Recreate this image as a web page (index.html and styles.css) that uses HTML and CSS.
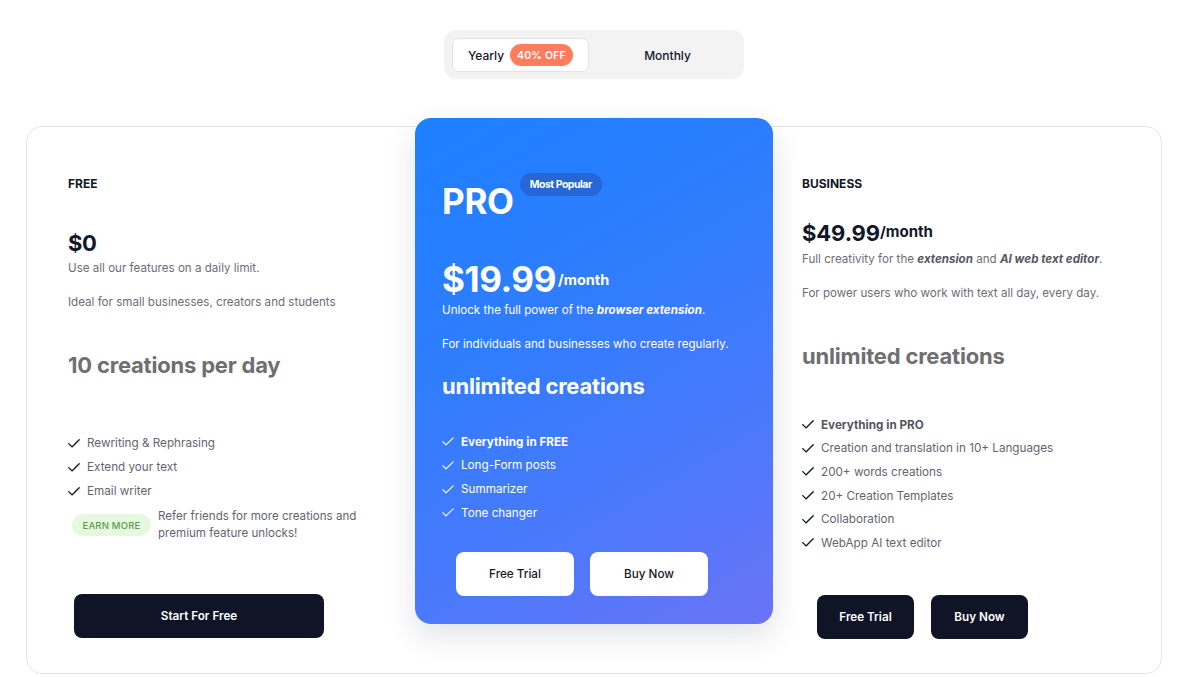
FILE: index.html
```html
<!DOCTYPE html>
<html lang="en">
<head>
<meta charset="utf-8">
<title>Pricing</title>
<link rel="stylesheet" href="styles.css">
</head>
<body>
<div class="toggle-wrap">
  <div class="toggle">
    <div class="tab tab-active">
      <span>Yearly</span>
      <span class="off">40% OFF</span>
    </div>
    <div class="tab tab-plain">Monthly</div>
  </div>
</div>

<section class="plans">
  <div class="col col-free">
    <h3 class="plan-name">FREE</h3>
    <div class="price-row"><span class="price price-free">$0</span></div>
    <p class="desc desc-1">Use all our features on a daily limit.</p>
    <p class="desc desc-2">Ideal for small businesses, creators and students</p>
    <h2 class="headline">10 creations per day</h2>
    <ul class="features features-free">
      <li><svg class="check" viewBox="0 0 12 9"><path d="M0.8 4.6 L4 7.9 L11.2 0.8"/></svg>Rewriting &amp; Rephrasing</li>
      <li><svg class="check" viewBox="0 0 12 9"><path d="M0.8 4.6 L4 7.9 L11.2 0.8"/></svg>Extend your text</li>
      <li><svg class="check" viewBox="0 0 12 9"><path d="M0.8 4.6 L4 7.9 L11.2 0.8"/></svg>Email writer</li>
    </ul>
    <div class="earn">
      <span class="earn-badge">EARN MORE</span>
      <span class="earn-text">Refer friends for more creations and premium feature unlocks!</span>
    </div>
    <div class="btns btns-free">
      <button class="btn btn-dark btn-wide">Start For Free</button>
    </div>
  </div>

  <div class="col col-pro">
    <div class="pro-head">
      <h3 class="pro-name">PRO</h3>
      <span class="popular">Most Popular</span>
    </div>
    <div class="price-row price-row-pro"><span class="price price-pro">$19.99</span><span class="per per-pro">/month</span></div>
    <p class="desc desc-1">Unlock the full power of the <b><i>browser extension</i></b>.</p>
    <p class="desc desc-2">For individuals and businesses who create regularly.</p>
    <h2 class="headline headline-pro">unlimited creations</h2>
    <ul class="features features-pro">
      <li class="strong"><svg class="check" viewBox="0 0 12 9"><path d="M0.8 4.6 L4 7.9 L11.2 0.8"/></svg>Everything in FREE</li>
      <li><svg class="check" viewBox="0 0 12 9"><path d="M0.8 4.6 L4 7.9 L11.2 0.8"/></svg>Long-Form posts</li>
      <li><svg class="check" viewBox="0 0 12 9"><path d="M0.8 4.6 L4 7.9 L11.2 0.8"/></svg>Summarizer</li>
      <li><svg class="check" viewBox="0 0 12 9"><path d="M0.8 4.6 L4 7.9 L11.2 0.8"/></svg>Tone changer</li>
    </ul>
    <div class="btns btns-pro">
      <button class="btn btn-light btn-pro">Free Trial</button>
      <button class="btn btn-light btn-pro">Buy Now</button>
    </div>
  </div>

  <div class="col col-biz">
    <h3 class="plan-name">BUSINESS</h3>
    <div class="price-row price-row-biz"><span class="price price-biz">$49.99</span><span class="per">/month</span></div>
    <p class="desc desc-1">Full creativity for the <b><i>extension</i></b> and <b><i>AI web text editor</i></b>.</p>
    <p class="desc desc-2">For power users who work with text all day, every day.</p>
    <h2 class="headline">unlimited creations</h2>
    <ul class="features features-biz">
      <li class="strong"><svg class="check" viewBox="0 0 12 9"><path d="M0.8 4.6 L4 7.9 L11.2 0.8"/></svg>Everything in PRO</li>
      <li><svg class="check" viewBox="0 0 12 9"><path d="M0.8 4.6 L4 7.9 L11.2 0.8"/></svg>Creation and translation in 10+ Languages</li>
      <li><svg class="check" viewBox="0 0 12 9"><path d="M0.8 4.6 L4 7.9 L11.2 0.8"/></svg>200+ words creations</li>
      <li><svg class="check" viewBox="0 0 12 9"><path d="M0.8 4.6 L4 7.9 L11.2 0.8"/></svg>20+ Creation Templates</li>
      <li><svg class="check" viewBox="0 0 12 9"><path d="M0.8 4.6 L4 7.9 L11.2 0.8"/></svg>Collaboration</li>
      <li><svg class="check" viewBox="0 0 12 9"><path d="M0.8 4.6 L4 7.9 L11.2 0.8"/></svg>WebApp AI text editor</li>
    </ul>
    <div class="btns btns-biz">
      <button class="btn btn-dark btn-biz">Free Trial</button>
      <button class="btn btn-dark btn-biz">Buy Now</button>
    </div>
  </div>
</section>
</body>
</html>
```

FILE: styles.css
```css
* { box-sizing: border-box; }
html, body { margin: 0; padding: 0; background: #ffffff; }
body {
  font-family: Inter, "Noto Sans", "Liberation Sans", sans-serif;
  color: #111827;
  width: 1184px;
  height: 677px;
  overflow: hidden;
}
h2, h3, p, ul { margin: 0; padding: 0; }
ul { list-style: none; }

/* toggle */
.toggle-wrap { display: flex; justify-content: center; padding-top: 30px; padding-left: 4px; }
.toggle {
  width: 300px; height: 49px;
  background: #f3f3f4;
  border-radius: 12px;
  padding: 8px 8px 7px;
  display: flex; align-items: stretch;
}
.tab { display: flex; align-items: center; font-size: 12px; font-weight: 500; color: #111827; }
.tab-active {
  width: 137px;
  background: #fff;
  border: 1px solid #e2e3e6;
  border-radius: 7px;
  padding: 0 15px;
  justify-content: space-between;
}
.off {
  background: #ff7c5d; color: #fff;
  font-size: 10.5px; font-weight: 600;
  height: 22px; width: 63px; border-radius: 11px;
  display: flex; align-items: center; justify-content: center;
  letter-spacing: 0.2px;
}
.tab-plain { flex: 1; justify-content: center; padding-left: 10px; }

/* plans */
.plans {
  margin: 47px 0 0 26px;
  width: 1136px; height: 548px;
  border: 1px solid #e3e5ea;
  border-radius: 16px;
  display: flex; align-items: flex-start;
}
.col { display: flex; flex-direction: column; }
.col-free { width: 388px; padding: 49px 20px 0 41px; }
.col-biz { flex: 1; padding: 49px 20px 0 29px; }
.col-pro {
  width: 358px;
  margin-top: -9px;
  padding: 55px 20px 28px 27px;
  border-radius: 16px;
  color: #fff;
  background: linear-gradient(150deg, #1c80ff 0%, #307dfd 40%, #4b79fb 70%, #6a73f6 100%);
  box-shadow: 0 12px 30px rgba(30, 40, 70, 0.13);
}

.plan-name { font-size: 12px; line-height: 16px; font-weight: 700; color: #111827; letter-spacing: 0; }

.price-row { display: flex; align-items: center; }
.price { font-weight: 700; letter-spacing: -0.3px; }
.price-free { font-size: 22px; line-height: 28px; margin-top: 37px; }
.price-row-biz { margin-top: 26px; }
.price-biz { font-size: 22px; line-height: 30px; letter-spacing: -0.1px; }
.per { font-size: 15px; font-weight: 700; margin-top: -3px; }
.price-row-pro { margin-top: 36px; }
.price-pro { font-size: 35px; line-height: 42px; letter-spacing: -0.4px; }
.per-pro { margin-left: 2px; margin-top: 1px; font-size: 14.5px; }

.desc { font-size: 11.6px; line-height: 18px; color: #6b6e76; }
.desc-1 { margin-top: 2px; }
.desc-2 { margin-top: 16px; }
.desc b { font-weight: 700; color: #55585f; }
.col-pro .desc { color: #fff; }
.col-pro .desc-1 { margin-top: 1px; }
.col-pro .desc b { color: #fff; }

.headline { font-size: 22px; line-height: 28px; font-weight: 700; color: #6f6f72; margin-top: 40px; letter-spacing: -0.2px; }
.headline-pro { color: #fff; margin-top: 19px; }

.features li { display: flex; align-items: center; font-size: 11.7px; color: #63666e; }
.features .check { width: 12px; height: 9px; margin-right: 7px; flex: none; fill: none; stroke: #111827; stroke-width: 1.35; stroke-linecap: round; stroke-linejoin: round; }
.features li.strong { font-weight: 700; color: #55585f; }
.features-free { margin-top: 52px; }
.features-free li { height: 24px; }
.features-pro { margin-top: 30px; }
.features-pro li { height: 23.67px; color: #fff; }
.features-pro li.strong { color: #fff; }
.features-pro .check { stroke: #fff; stroke-width: 1.1; }
.features-biz { margin-top: 43px; }
.features-biz li { height: 23.6px; }

.earn { display: flex; align-items: center; margin-top: 5px; margin-left: 4px; }
.earn-badge {
  flex: none;
  width: 79px; height: 22px; border-radius: 11px;
  background: #e7f8e1; color: #5a9f48;
  font-size: 9.5px; font-weight: 500; letter-spacing: 0.2px;
  display: flex; align-items: center; justify-content: center;
  margin-right: 7px;
}
.earn-text { font-size: 11.6px; line-height: 17px; color: #63666e; width: 215px; }

.btns { display: flex; }
.btn {
  font-family: inherit;
  border: none; border-radius: 8px;
  height: 44px; font-size: 11.7px; font-weight: 600;
  display: flex; align-items: center; justify-content: center;
}
.btn-dark { background: #0f1426; color: #fff; }
.btn-light { background: #fff; color: #111827; font-weight: 500; }
.btns-free { margin-top: 52px; padding-left: 6px; }
.btn-wide { width: 250px; }
.btns-pro { margin-top: 27px; padding-left: 14px; gap: 16px; }
.btn-pro { width: 118px; }
.btns-biz { margin-top: 40px; padding-left: 15px; gap: 17px; }
.btn-biz { width: 97px; }

.pro-head { display: flex; align-items: flex-start; }
.pro-name { font-size: 35px; line-height: 42px; font-weight: 700; margin-top: 7px; letter-spacing: -0.3px; }
.popular {
  margin-left: 6px;
  height: 23px; padding: 0 10px;
  border-radius: 12px;
  background: #2766d6;
  font-size: 10.5px; font-weight: 700; letter-spacing: -0.5px;
  display: flex; align-items: center;
}
```
